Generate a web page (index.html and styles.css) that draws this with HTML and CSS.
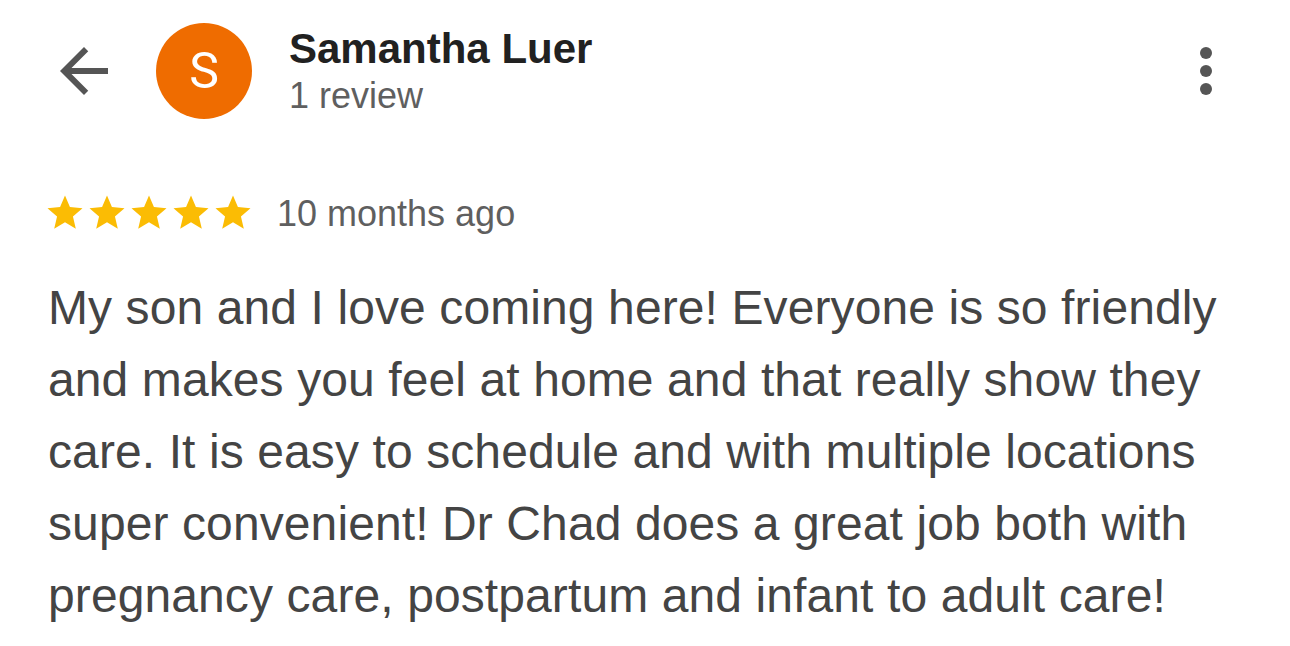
FILE: index.html
```html
<!DOCTYPE html>
<html>
<head>
    <title>Review</title>
    <link rel="stylesheet" href="styles.css">
</head>
<body>
    <div class="header">
        <svg class="icon back" viewBox="0 0 24 24">
            <path d="M20 11H7.83l5.59-5.59L12 4l-8 8 8 8 1.41-1.41L7.83 13H20v-2z"/>
        </svg>
        <div class="avatar">S</div>
        <div class="author">
            <div class="name">Samantha Luer</div>
            <div class="count">1 review</div>
        </div>
        <svg class="icon more" viewBox="0 0 24 24">
            <circle cx="12" cy="6" r="2"/>
            <circle cx="12" cy="12" r="2"/>
            <circle cx="12" cy="18" r="2"/>
        </svg>
    </div>

    <div class="rating">
        <div class="stars">
            <svg viewBox="0 0 24 24"><path d="M12 17.27L18.18 21l-1.64-7.03L22 9.24l-7.19-.61L12 2 9.19 8.63 2 9.24l5.46 4.73L5.82 21z"/></svg>
            <svg viewBox="0 0 24 24"><path d="M12 17.27L18.18 21l-1.64-7.03L22 9.24l-7.19-.61L12 2 9.19 8.63 2 9.24l5.46 4.73L5.82 21z"/></svg>
            <svg viewBox="0 0 24 24"><path d="M12 17.27L18.18 21l-1.64-7.03L22 9.24l-7.19-.61L12 2 9.19 8.63 2 9.24l5.46 4.73L5.82 21z"/></svg>
            <svg viewBox="0 0 24 24"><path d="M12 17.27L18.18 21l-1.64-7.03L22 9.24l-7.19-.61L12 2 9.19 8.63 2 9.24l5.46 4.73L5.82 21z"/></svg>
            <svg viewBox="0 0 24 24"><path d="M12 17.27L18.18 21l-1.64-7.03L22 9.24l-7.19-.61L12 2 9.19 8.63 2 9.24l5.46 4.73L5.82 21z"/></svg>
        </div>
        <span class="date">10 months ago</span>
    </div>

    <p class="review">My son and I love coming here! Everyone is so friendly and makes you feel at home and that really show they care. It is easy to schedule and with multiple locations super convenient! Dr Chad does a great job both with pregnancy care, postpartum and infant to adult care!</p>
</body>
</html>
```

FILE: styles.css
```css
body {
    margin: 0;
    background: #fff;
    font-family: 'Liberation Sans', Arial, sans-serif;
    overflow: hidden;
}

.header {
    display: flex;
    align-items: center;
    height: 96px;
    padding: 23px 48px 0 48px;
}

.icon {
    width: 72px;
    height: 72px;
    fill: #555;
    flex-shrink: 0;
}

.avatar {
    width: 96px;
    height: 96px;
    margin-left: 36px;
    border-radius: 50%;
    background-color: #ef6c00;
    color: #fff;
    font-family: Roboto, sans-serif;
    font-size: 50px;
    display: flex;
    align-items: center;
    justify-content: center;
    flex-shrink: 0;
}

.author {
    align-self: flex-start;
    margin-left: 37px;
    padding-top: 2px;
    flex: 1;
}

.name {
    font-size: 42px;
    font-weight: bold;
    line-height: 48px;
    color: #212121;
}

.count {
    font-size: 36px;
    line-height: 46px;
    color: #5f5f5f;
}

.rating {
    display: flex;
    align-items: center;
    margin-top: 73px;
    padding-left: 44px;
}

.stars {
    display: flex;
}

.stars svg {
    width: 42px;
    height: 42px;
    fill: #fbbc04;
}

.date {
    margin-left: 23px;
    font-size: 36px;
    line-height: 39px;
    color: #5f5f5f;
}

.review {
    margin: 38px 0 0 0;
    padding: 0 20px 0 48px;
    font-size: 48px;
    line-height: 72px;
    letter-spacing: 0.1px;
    color: #444;
}
```
